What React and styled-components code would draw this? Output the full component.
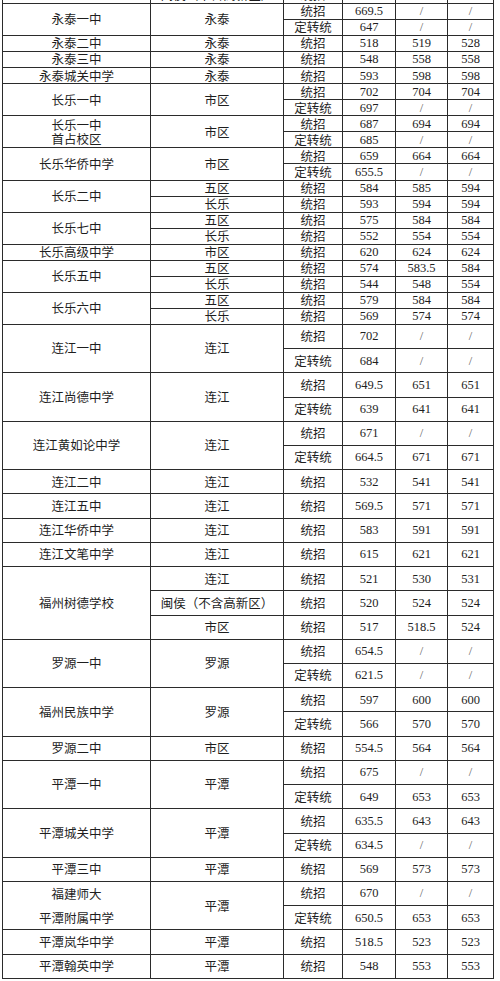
import React from 'react';
import styled, { createGlobalStyle } from 'styled-components';

const GlobalStyle = createGlobalStyle`
  html, body {
    margin: 0;
    padding: 0;
    background: #fff;
  }
  body {
    width: 500px;
    height: 981px;
    overflow: hidden;
  }
`;

const Page = styled.div`
  width: 500px;
  height: 981px;
  overflow: hidden;
  background: #fff;
`;

const Grid = styled.div`
  display: grid;
  grid-template-columns: 147px 132px 58px 52px 51px 45px;
  grid-template-rows: ${(p) => p.$rows};
  gap: 1px;
  background: #2b2b2b;
  border: 1px solid #2b2b2b;
  width: max-content;
  margin: -13px 0 0 2px;
`;

const Cell = styled.div`
  background: #fff;
  display: flex;
  align-items: center;
  justify-content: center;
  text-align: center;
  font-family: "Liberation Serif", "Noto Sans CJK SC", serif;
  font-size: 12.5px;
  color: ${(p) => (p.$muted ? '#666' : '#1e1e1e')};
  line-height: ${(p) => p.$lh || '1.15'};
  white-space: nowrap;
  grid-row: span ${(p) => p.$span || 1};
`;

const Name = styled(Cell)`
  font-family: "Noto Sans CJK SC", sans-serif;
  flex-direction: column;
`;

const Label = styled(Cell)`
  font-family: "Noto Sans CJK SC", sans-serif;
`;

const S = '/';

const groups = [
  { name: '', area: '闽侯（不含高新区）', rows: [['统招', '', '', '']] },
  { name: '永泰一中', area: '永泰', rows: [['统招', '669.5', S, S], ['定转统', '647', S, S]] },
  { name: '永泰二中', area: '永泰', rows: [['统招', '518', '519', '528']] },
  { name: '永泰三中', area: '永泰', rows: [['统招', '548', '558', '558']] },
  { name: '永泰城关中学', area: '永泰', rows: [['统招', '593', '598', '598']] },
  { name: '长乐一中', area: '市区', rows: [['统招', '702', '704', '704'], ['定转统', '697', S, S]] },
  { name: '长乐一中\n首占校区', area: '市区', rows: [['统招', '687', '694', '694'], ['定转统', '685', S, S]] },
  { name: '长乐华侨中学', area: '市区', rows: [['统招', '659', '664', '664'], ['定转统', '655.5', S, S]] },
  { name: '长乐二中', rows: [['五区', '统招', '584', '585', '594'], ['长乐', '统招', '593', '594', '594']] },
  { name: '长乐七中', rows: [['五区', '统招', '575', '584', '584'], ['长乐', '统招', '552', '554', '554']] },
  { name: '长乐高级中学', area: '市区', rows: [['统招', '620', '624', '624']] },
  { name: '长乐五中', rows: [['五区', '统招', '574', '583.5', '584'], ['长乐', '统招', '544', '548', '554']] },
  { name: '长乐六中', rows: [['五区', '统招', '579', '584', '584'], ['长乐', '统招', '569', '574', '574']] },
  { name: '连江一中', area: '连江', rows: [['统招', '702', S, S], ['定转统', '684', S, S]] },
  { name: '连江尚德中学', area: '连江', rows: [['统招', '649.5', '651', '651'], ['定转统', '639', '641', '641']] },
  { name: '连江黄如论中学', area: '连江', rows: [['统招', '671', S, S], ['定转统', '664.5', '671', '671']] },
  { name: '连江二中', area: '连江', rows: [['统招', '532', '541', '541']] },
  { name: '连江五中', area: '连江', rows: [['统招', '569.5', '571', '571']] },
  { name: '连江华侨中学', area: '连江', rows: [['统招', '583', '591', '591']] },
  { name: '连江文笔中学', area: '连江', rows: [['统招', '615', '621', '621']] },
  {
    name: '福州树德学校',
    rows: [
      ['连江', '统招', '521', '530', '531'],
      ['闽侯（不含高新区）', '统招', '520', '524', '524'],
      ['市区', '统招', '517', '518.5', '524'],
    ],
  },
  { name: '罗源一中', area: '罗源', rows: [['统招', '654.5', S, S], ['定转统', '621.5', S, S]] },
  { name: '福州民族中学', area: '罗源', rows: [['统招', '597', '600', '600'], ['定转统', '566', '570', '570']] },
  { name: '罗源二中', area: '市区', rows: [['统招', '554.5', '564', '564']] },
  { name: '平潭一中', area: '平潭', rows: [['统招', '675', S, S], ['定转统', '649', '653', '653']] },
  { name: '平潭城关中学', area: '平潭', rows: [['统招', '635.5', '643', '643'], ['定转统', '634.5', S, S]] },
  { name: '平潭三中', area: '平潭', rows: [['统招', '569', '573', '573']] },
  { name: '福建师大\n平潭附属中学', area: '平潭', lh: '24px', rows: [['统招', '670', S, S], ['定转统', '650.5', '653', '653']] },
  { name: '平潭岚华中学', area: '平潭', rows: [['统招', '518.5', '523', '523']] },
  { name: '平潭翰英中学', area: '平潭', rows: [['统招', '548', '553', '553']] },
];

const rowTemplate = '15px repeat(20, 15.05px) repeat(27, 23.22px)';

export default function App() {
  const cells = [];
  groups.forEach((g, gi) => {
    const n = g.rows.length;
    if (gi === 0) {
      cells.push(<Name key={`n${gi}`} />);
    } else {
      cells.push(
        <Name key={`n${gi}`} $span={n} $lh={g.lh}>
          {g.name.split('\n').map((line, i) => (
            <span key={i}>{line}</span>
          ))}
        </Name>
      );
    }
    g.rows.forEach((r, ri) => {
      let rest = r;
      if (g.area) {
        if (ri === 0) cells.push(<Label key={`a${gi}`} $span={n}>{g.area}</Label>);
      } else {
        cells.push(<Label key={`a${gi}-${ri}`}>{r[0]}</Label>);
        rest = r.slice(1);
      }
      const [type, ...vals] = rest;
      cells.push(<Label key={`t${gi}-${ri}`}>{type}</Label>);
      vals.forEach((v, vi) => (
        cells.push(<Cell key={`v${gi}-${ri}-${vi}`} $muted={v === S}>{v}</Cell>)
      ));
    });
  });

  return (
    <Page>
      <GlobalStyle />
      <Grid $rows={rowTemplate}>{cells}</Grid>
    </Page>
  );
}
